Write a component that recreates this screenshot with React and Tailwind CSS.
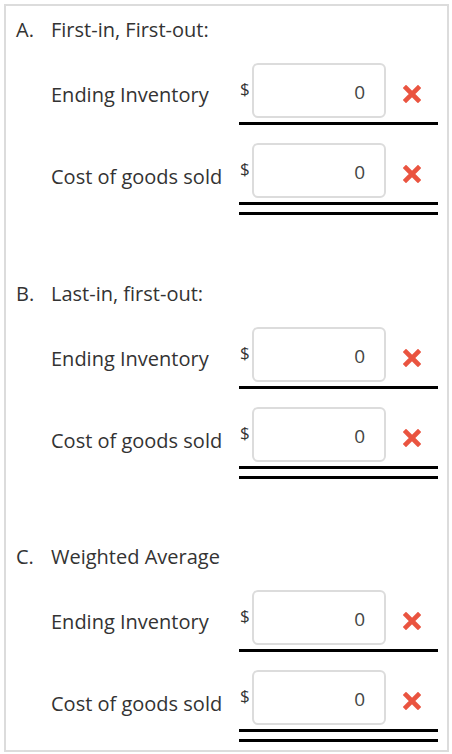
import React from "react";

const RedX = () => (
  <svg width="18" height="18" viewBox="0 0 18 18" className="block">
    <path d="M3 3 L15 15 M15 3 L3 15" stroke="#ea5440" strokeWidth="4.6" strokeLinecap="square" />
  </svg>
);

const AmountRow = ({ label, double }) => (
  <div className="flex">
    <div
      className={
        "w-[233px] shrink-0 whitespace-nowrap pl-[45px] text-[20px] leading-[27px] text-[#333] " +
        (double ? "pt-[20px]" : "pt-[18px]")
      }
    >
      {label}
    </div>
    <div className="w-[199px] shrink-0">
      <div className="flex items-start">
        <span className="w-[13px] pl-[1px] pt-[16px] text-[17px] leading-5 text-[#333]">$</span>
        <div className="flex h-[55px] w-[134px] items-center justify-end rounded-[6px] border-2 border-[#dcdcdc] bg-white pr-[19px] pt-[3px] text-[19px] text-[#444]">
          0
        </div>
        <div className="ml-[17px] mt-[22px]">
          <RedX />
        </div>
      </div>
      {double ? (
        <div className="mt-[4px]">
          <div className="h-[3px] bg-black" />
          <div className="mt-[7px] h-[3px] bg-black" />
        </div>
      ) : (
        <div className="mt-[4px] h-[3px] bg-black" />
      )}
    </div>
  </div>
);

const Section = ({ letter, title, top }) => (
  <div className={top}>
    <div className="flex pl-[10px] text-[20px] leading-[27px] text-[#333]">
      <span className="w-[35px]">{letter}</span>
      <span>{title}</span>
    </div>
    <div className="mt-[20px]">
      <AmountRow label="Ending Inventory" />
    </div>
    <div className="mt-[18px]">
      <AmountRow label="Cost of goods sold" double />
    </div>
  </div>
);

export default function App() {
  return (
    <div className="h-[754px] w-[452px] bg-white pl-1 pt-1" style={{ fontFamily: '"Open Sans", sans-serif' }}>
      <div className="h-[748px] w-[445px] border-2 border-[#dcdcdc]">
        <Section letter="A." title="First-in, First-out:" top="pt-[10px]" />
        <Section letter="B." title="Last-in, first-out:" top="pt-[65px]" />
        <Section letter="C." title="Weighted Average" top="pt-[64px]" />
      </div>
    </div>
  );
}
